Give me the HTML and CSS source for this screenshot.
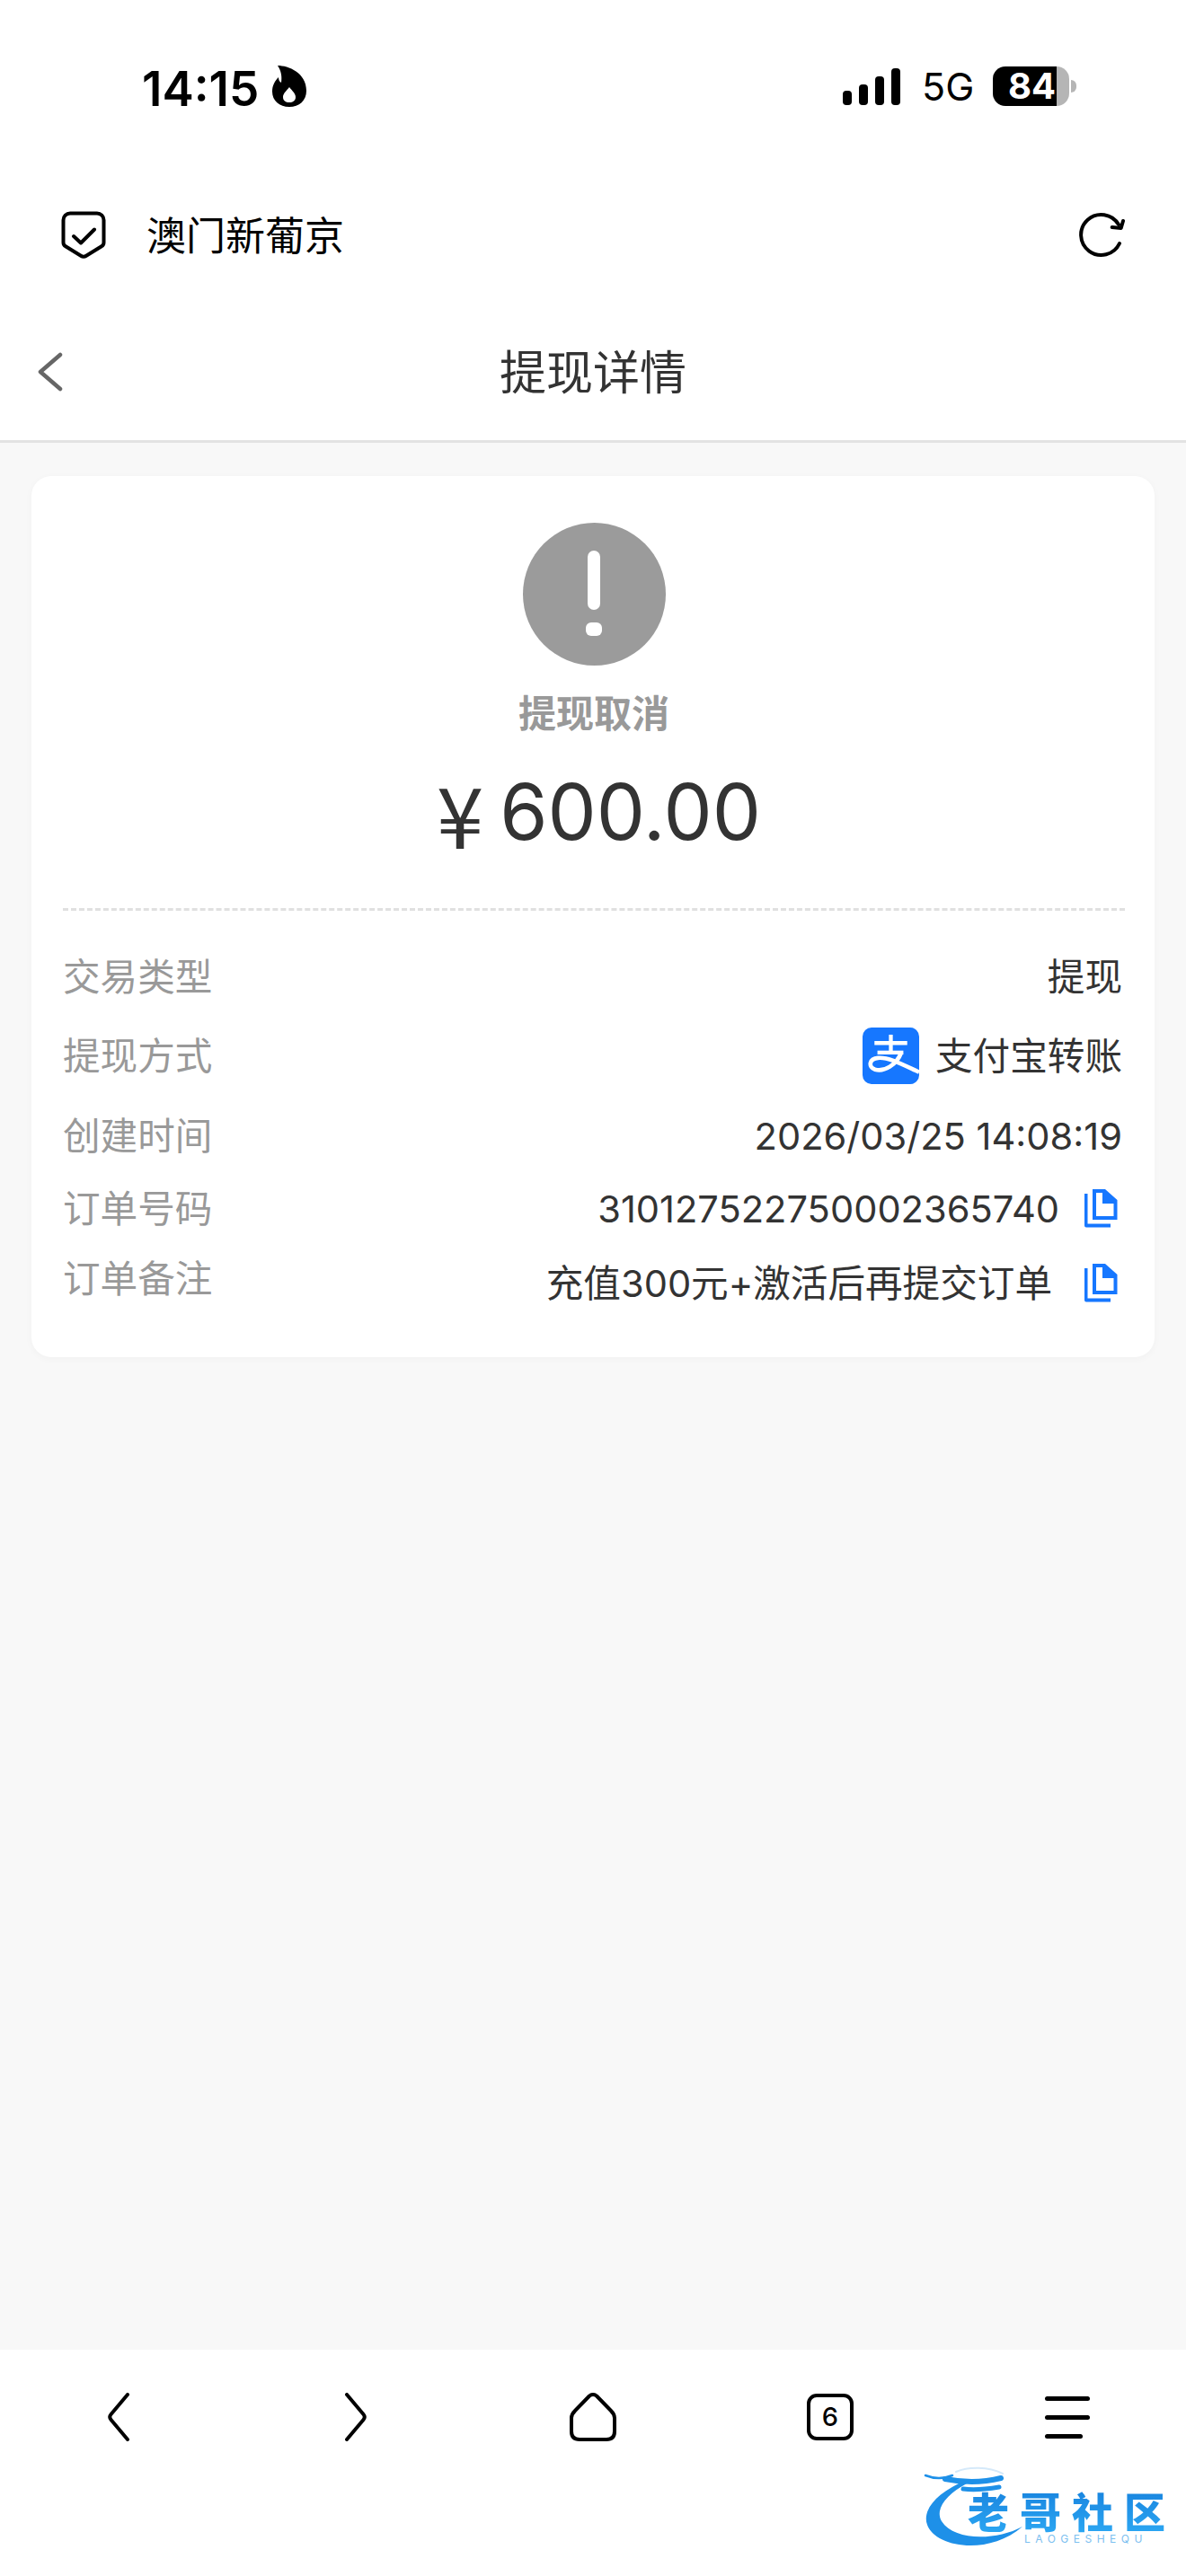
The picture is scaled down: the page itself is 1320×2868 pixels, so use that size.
FILE: index.html
```html
<!DOCTYPE html>
<html lang="zh-CN">
<head>
    <meta charset="UTF-8">
    <meta name="viewport" content="width=device-width, initial-scale=1.0">
    <title>提现详情</title>
    <link rel="stylesheet" href="styles.css">
</head>
<body>
    <!-- Status bar -->
    <div class="status-bar">
        <div class="status-left">
            <span class="time">14:15</span>
            <svg class="flame" viewBox="0 0 38 46" width="38" height="46">
                <path fill-rule="evenodd" d="M6 0C18 0 38 8 38 28C38 39 30 46 19 46C8 46 0 39 0 29C0 22 3 17 7 13C7 16 8 18 10 19C11 12 10 6 6 0ZM19 24C16 28 12 31 12 35C12 39 15 41 19 41C23 41 26 39 26 35C26 31 22 28 19 24Z"/>
            </svg>
        </div>
        <div class="status-right">
            <div class="signal">
                <span class="bar bar-1"></span>
                <span class="bar bar-2"></span>
                <span class="bar bar-3"></span>
                <span class="bar bar-4"></span>
            </div>
            <span class="network">5G</span>
            <div class="battery">
                <div class="battery-body"><span class="battery-level">84</span></div>
                <span class="battery-nub"></span>
            </div>
        </div>
    </div>

    <!-- Browser address bar -->
    <div class="address-bar">
        <svg class="shield" viewBox="0 0 50 54" width="50" height="54" fill="none" stroke="#000" stroke-width="4" stroke-linecap="round" stroke-linejoin="round">
            <path d="M10 2.500H40A7.500 7.500 0 0 1 47.500 10V35A5 5 0 0 1 45 39.300L28 49.800A5.500 5.500 0 0 1 22 49.800L5 39.300A5 5 0 0 1 2.500 35V10A7.500 7.500 0 0 1 10 2.500Z"/>
            <path d="M14 28L22 35.500L37 20.500"/>
        </svg>
        <span class="site-name">澳门新葡京</span>
        <svg class="reload" viewBox="0 0 52 52" width="52" height="52" fill="none" stroke="#000" stroke-width="4" stroke-linecap="round" stroke-linejoin="round">
            <path d="M46 35A22.500 22.500 0 1 1 45 14"/>
            <path d="M50 10L47.700 18L37.700 17"/>
        </svg>
    </div>

    <!-- Page header -->
    <div class="page-header">
        <svg class="back" viewBox="0 0 28 44" width="28" height="44" fill="none" stroke="#666" stroke-width="4.500" stroke-linecap="round" stroke-linejoin="round">
            <path d="M25 3L3 22L25 41"/>
        </svg>
        <h1 class="page-title">提现详情</h1>
    </div>

    <div class="content">
        <div class="card">
            <div class="state">
                <div class="state-icon"><span class="mark-line"></span><span class="mark-dot"></span></div>
                <div class="state-text">提现取消</div>
                <div class="amount"><span class="currency">¥</span><span>600.00</span></div>
            </div>
            <div class="details">
                <div class="row row-type">
                    <span class="row-label">交易类型</span>
                    <span class="row-value">提现</span>
                </div>
                <div class="row row-method">
                    <span class="row-label">提现方式</span>
                    <span class="row-value">
                        <svg class="alipay" viewBox="0 0 190 190" width="63" height="63">
                            <rect width="190" height="190" rx="30" fill="#1677ff"/>
                            <g fill="none" stroke="#fff" stroke-width="13">
                                <path d="M40 52H150"/>
                                <path d="M95 24V84"/>
                                <path d="M50 84H137"/>
                                <path d="M130 84C114 126 72 150 42 141C18 133 22 104 52 102C88 99 130 122 190 150" stroke-width="14"/>
                            </g>
                        </svg>
                        支付宝转账
                    </span>
                </div>
                <div class="row row-date">
                    <span class="row-label">创建时间</span>
                    <span class="row-value">2026/03/25 14:08:19</span>
                </div>
                <div class="row row-order">
                    <span class="row-label">订单号码</span>
                    <span class="row-value">
                        310127522750002365740
                        <svg class="copy" viewBox="0 0 37 43" width="37" height="43">
                            <path fill="#1677ff" d="M0 5H3.500V38.500H29V42.500H2Q0 42.500 0 40.500Z"/>
                            <path fill="#1677ff" fill-rule="evenodd" d="M9 0H23L36.500 12V34H9ZM13 4V30H32.500V16H20V4Z"/>
                        </svg>
                    </span>
                </div>
                <div class="row row-note">
                    <span class="row-label">订单备注</span>
                    <span class="row-value">
                        充值300元+激活后再提交订单
                        <svg class="copy copy-note" viewBox="0 0 37 43" width="37" height="43">
                            <path fill="#1677ff" d="M0 5H3.500V38.500H29V42.500H2Q0 42.500 0 40.500Z"/>
                            <path fill="#1677ff" fill-rule="evenodd" d="M9 0H23L36.500 12V34H9ZM13 4V30H32.500V16H20V4Z"/>
                        </svg>
                    </span>
                </div>
            </div>
        </div>
    </div>

    <!-- Browser toolbar -->
    <div class="toolbar">
        <svg class="tool" viewBox="0 0 26 54" width="26" height="54" fill="none" stroke="#000" stroke-width="4" stroke-linecap="round" stroke-linejoin="round">
            <path d="M23 2L4.500 24Q2 27 4.500 30L23 52"/>
        </svg>
        <svg class="tool" viewBox="0 0 26 54" width="26" height="54" fill="none" stroke="#000" stroke-width="4" stroke-linecap="round" stroke-linejoin="round">
            <path d="M3 2L21.500 24Q24 27 21.500 30L3 52"/>
        </svg>
        <svg class="tool" viewBox="0 0 52 54" width="52" height="54" fill="none" stroke="#000" stroke-width="4" stroke-linejoin="round">
            <path d="M22 3.500Q26 0.500 30 3.500L46 20Q50 24 50 28V43Q50 52 41 52H11Q2 52 2 43V28Q2 24 6 20Z"/>
        </svg>
        <div class="tool tabs-count">6</div>
        <div class="tool menu">
            <span class="menu-line"></span>
            <span class="menu-line"></span>
            <span class="menu-line menu-line-short"></span>
        </div>
    </div>

    <!-- Watermark over the toolbar -->
    <div class="watermark">
        <svg class="watermark-logo" viewBox="0 0 130 100" width="130" height="100" fill="none" stroke="#1e90e8" stroke-linecap="round">
            <path fill="#1e90e8" stroke="none" d="M48 16C14 30 -2 50 4 66C12 90 70 102 110 68C80 84 34 84 20 62C12 48 26 32 48 20Z"/>
            <path d="M2 11C12 15 22 15 32 11" stroke-width="2.500"/>
            <path d="M24 15C44 19 66 19 86 14" stroke-width="6"/>
            <path d="M44 26C58 28 72 26 84 24" stroke-width="5"/>
            <path d="M36 7C50 1 72 1 88 9" stroke="#d5e9f9" stroke-width="2"/>
        </svg>
        <span class="watermark-name">老哥社区</span>
        <span class="watermark-sub">LAOGESHEQU</span>
    </div>
</body>
</html>
```

FILE: styles.css
```css
* {
    box-sizing: border-box;
}

html, body {
    margin: 0;
    padding: 0;
}

body {
    position: relative;
    display: flex;
    flex-direction: column;
    width: 1320px;
    height: 2868px;
    overflow: hidden;
    background-color: #f8f8f8;
    color: #333;
    font-family: Inter, "Noto Sans CJK SC", sans-serif;
}

/* Status bar */
.status-bar {
    display: flex;
    justify-content: space-between;
    align-items: flex-start;
    height: 192px;
    padding: 73px 122px 0 158px;
    background-color: #fff;
    color: #000;
}

.status-left {
    display: flex;
    align-items: flex-start;
    gap: 15px;
}

.time {
    font-size: 53px;
    font-weight: 600;
    line-height: 46px;
    margin-top: 3px;
}

.status-right {
    display: flex;
    align-items: center;
    height: 46px;
}

.signal {
    display: flex;
    align-items: flex-end;
    gap: 8px;
    height: 41px;
    margin-right: 24px;
}

.bar {
    width: 10px;
    border-radius: 4px;
    background-color: #000;
}

.bar-1 { height: 16px; }
.bar-2 { height: 23px; }
.bar-3 { height: 32px; }
.bar-4 { height: 41px; }

.network {
    width: 79px;
    font-size: 43px;
    line-height: 46px;
}

.battery {
    display: flex;
    align-items: center;
}

.battery-body {
    width: 85px;
    height: 44px;
    border-radius: 14px;
    background: linear-gradient(to right, #000 84%, #b5b5b5 84%);
}

.battery-level {
    display: block;
    padding-left: 17px;
    color: #fff;
    font-size: 40px;
    font-weight: 700;
    line-height: 44px;
}

.battery-nub {
    width: 6px;
    height: 14px;
    margin-left: 2px;
    border-radius: 0 7px 7px 0;
    background-color: #b5b5b5;
}

/* Address bar */
.address-bar {
    display: flex;
    align-items: center;
    height: 140px;
    padding: 0 68px;
    background-color: #fff;
    color: #000;
}

.site-name {
    flex: 1;
    margin: 0 0 4px 45px;
    font-size: 44px;
}

/* Header */
.page-header {
    position: relative;
    display: flex;
    justify-content: center;
    align-items: center;
    height: 161px;
    border-bottom: 3px solid #e3e3e3;
    background-color: #fff;
}

.back {
    position: absolute;
    left: 42px;
    top: 60px;
}

.page-title {
    margin: 0;
    color: #333;
    font-size: 52px;
    font-weight: 400;
}

/* Card */
.content {
    flex: 1;
    padding: 37px 35px 0;
}

.card {
    height: 981px;
    padding: 0 35px;
    border-radius: 22px;
    background-color: #fff;
    box-shadow: 0 2px 8px rgba(0, 0, 0, 0.03);
}

.state {
    display: flex;
    flex-direction: column;
    align-items: center;
    height: 484px;
    margin-right: -2px;
    padding-top: 52px;
    border-bottom: 3px dashed #e0e0e0;
}

.state-icon {
    display: flex;
    flex-direction: column;
    align-items: center;
    width: 159px;
    height: 159px;
    padding-top: 31px;
    border-radius: 50%;
    background-color: #9b9b9b;
}

.mark-line {
    width: 14px;
    height: 66px;
    border-radius: 7px;
    background-color: #fff;
}

.mark-dot {
    width: 18px;
    height: 15px;
    margin-top: 14px;
    border-radius: 6px;
    background-color: #fff;
}

.state-text {
    margin-top: 26px;
    color: #999;
    font-size: 42px;
    font-weight: 700;
    line-height: 56px;
}

.amount {
    display: flex;
    align-items: center;
    margin-top: 29px;
    padding-left: 11px;
    gap: 18px;
    color: #333;
    font-size: 86px;
    line-height: 104px;
}

.currency {
    font-family: "Noto Sans CJK SC", sans-serif;
    font-size: 94px;
}

.details {
    padding: 0 1px 0 0;
}

.row {
    display: flex;
    justify-content: space-between;
    align-items: center;
    font-size: 41.6px;
    line-height: 56px;
}

.row-type { margin-top: 46px; }
.row-method { margin-top: 28px; height: 63px; }
.row-date { margin-top: 30px; }
.row-order { margin-top: 25px; }
.row-note { margin-top: 22px; align-items: flex-start; }

.row-label {
    color: #999;
}

.row-value {
    display: flex;
    align-items: center;
    color: #333;
}

.row-note .row-value {
    margin-top: 5px;
}

.alipay {
    margin-right: 18px;
}

.copy {
    margin: -2px 5px 0 28px;
}

.copy-note {
    margin-left: 36px;
}

/* Toolbar */
.toolbar {
    display: grid;
    grid-template-columns: repeat(5, 264px);
    justify-items: center;
    align-items: center;
    height: 252px;
    padding-bottom: 102px;
    background-color: #fff;
    color: #000;
}

.tabs-count {
    width: 52px;
    height: 52px;
    border: 4px solid #000;
    border-radius: 11px;
    font-size: 29px;
    font-weight: 500;
    line-height: 44px;
    text-align: center;
}

.menu {
    display: flex;
    flex-direction: column;
    gap: 16px;
    width: 50px;
}

.menu-line {
    height: 5px;
    border-radius: 3px;
    background-color: #000;
}

.menu-line-short {
    width: 42px;
}

/* Watermark */
.watermark {
    position: absolute;
    left: 1028px;
    top: 2745px;
    width: 280px;
    height: 100px;
}

.watermark-logo {
    position: absolute;
    left: 0;
    top: 0;
}

.watermark-name {
    position: absolute;
    left: 49px;
    top: 29px;
    background: linear-gradient(to bottom, #1a86e0, #2ba6f2);
    -webkit-background-clip: text;
    background-clip: text;
    color: transparent;
    font-size: 46px;
    font-weight: 900;
    letter-spacing: 12px;
    line-height: 46px;
    white-space: nowrap;
}

.watermark-sub {
    position: absolute;
    left: 112px;
    top: 75px;
    color: #7cc0f0;
    font-size: 12px;
    letter-spacing: 5.500px;
    line-height: 14px;
    white-space: nowrap;
}
```
